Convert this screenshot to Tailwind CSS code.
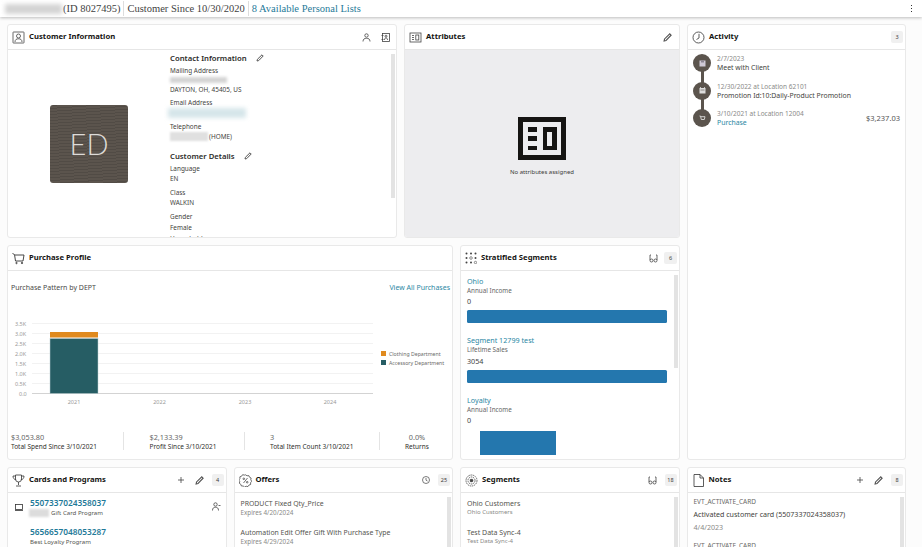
<!DOCTYPE html>
<html lang="en">
<head>
    <meta charset="UTF-8">
    <meta name="viewport" content="width=device-width, initial-scale=1.0">
    <title>Customer 360</title>
    <script src="https://cdn.jsdelivr.net/npm/@tailwindcss/browser@4"></script>
</head>
<body class="h-[547px] overflow-hidden bg-[#fcfcfc] font-['Noto_Sans',sans-serif] text-[#3a3a38]">
    <!-- Top bar -->
    <div class="h-[17px] bg-white shadow-[0_1px_3px_rgba(0,0,0,0.25)] flex items-center font-['Liberation_Serif',serif] text-[10.500px] text-[#3f3f3f] relative">
        <div class="w-[57px] h-[10px] ml-[5px] bg-[#d4d4d4] blur-[2px]"></div>
        <span class="ml-[1px] pr-[3px] border-r border-[#ddd] leading-[15px] oldstyle-nums">(ID 8027495)</span>
        <span class="px-[3px] border-r border-[#ddd] leading-[15px] oldstyle-nums">Customer Since 10/30/2020</span>
        <span class="pl-[3px] text-[#1f7a99] oldstyle-nums">8 Available Personal Lists</span>
        <div class="ml-auto mr-[10px] flex flex-col gap-[1.500px]">
            <span class="w-[1.500px] h-[1.500px] bg-[#333]"></span>
            <span class="w-[1.500px] h-[1.500px] bg-[#333]"></span>
            <span class="w-[1.500px] h-[1.500px] bg-[#333]"></span>
        </div>
    </div>

    <div class="pl-[7px] pt-[7px] w-[906px]">
        <div class="grid grid-cols-[673px_219px] gap-x-[7px]">
            <!-- Left block -->
            <div class="flex flex-col gap-[7px]">
                <div class="flex gap-[7px] h-[214px]">
                    <!-- Customer Information -->
                    <section class="w-[390px] bg-white border border-[#e9e9e9] rounded-[3px] flex flex-col overflow-hidden">
                        <header class="h-[25px] shrink-0 border-b border-[#e6e6e6] flex items-center pl-[4px] pr-[6px]">
                            <svg class="w-[13px] h-[13px]" viewBox="0 0 13 13" fill="none" stroke="#444" stroke-width="0.8"><rect x="1" y="1" width="11" height="11" rx="0.5"/><circle cx="6.5" cy="5" r="2"/><path d="M3 11c0-2.5 1.5-3.2 3.500-3.200S10 8.500 10 11"/></svg>
                            <h2 class="ml-[4px] text-[7.700px] font-bold text-[#161513]">Customer Information</h2>
                            <svg class="ml-auto w-[9px] h-[9px]" viewBox="0 0 9 9" fill="none" stroke="#444" stroke-width="0.8"><circle cx="4.500" cy="2.500" r="1.700"/><path d="M1 8.500c0-2.500 1.500-3.200 3.500-3.200S8 6 8 8.500"/></svg>
                            <svg class="ml-[10px] w-[9px] h-[9px]" viewBox="0 0 9 9" fill="none" stroke="#444" stroke-width="0.8"><rect x="1.500" y="0.500" width="7" height="8"/><circle cx="5" cy="3.200" r="1"/><path d="M3.500 7c0-1.500.6-2 1.500-2s1.500.5 1.500 2M0.500 2.500h2M0.500 6.500h2"/></svg>
                        </header>
                        <div class="flex-1 flex relative overflow-hidden">
                            <div class="w-[162px] shrink-0 flex items-center justify-center">
                                <div class="w-[78px] h-[78px] rounded-[3px] bg-[#5b544d] bg-[repeating-linear-gradient(176deg,#514b45_0,#514b45_1px,transparent_1px,transparent_3px)] flex items-center justify-center font-['Lato',sans-serif] font-light text-[29px] text-[#dddbd8]">ED</div>
                            </div>
                            <div class="text-[6.400px] text-[#3f3f3d] leading-[9px]">
                                <div class="flex items-center mt-[2.500px] h-[11px]">
                                    <h3 class="text-[7.700px] font-semibold text-[#2d2c2a]">Contact Information</h3>
                                    <svg class="ml-[9px] w-[8px] h-[8px]" viewBox="0 0 8 8" fill="none" stroke="#555" stroke-width="1"><path d="M1 7l.4-1.700L6 .8l1.200 1.200-4.500 4.600z"/></svg>
                                </div>
                                <p class="mt-[2px]">Mailing Address</p>
                                <div class="w-[57px] h-[6px] mt-[2px] bg-[#d4d4d4] blur-[1.500px]"></div>
                                <p class="mt-[2px]">DAYTON, OH, 45405, US</p>
                                <p class="mt-[4px]">Email Address</p>
                                <div class="w-[78px] h-[10px] -ml-[2px] mt-[1.500px] bg-[#d6e6ea] blur-[2px]"></div>
                                <p class="mt-[3.500px]">Telephone</p>
                                <div class="flex items-center mt-[1px]">
                                    <div class="w-[38px] h-[9px] bg-[#e0e0e0] blur-[1px]"></div>
                                    <span class="ml-[1px]">(HOME)</span>
                                </div>
                                <div class="flex items-center mt-[10px] h-[11px]">
                                    <h3 class="text-[7.700px] font-semibold text-[#2d2c2a]">Customer Details</h3>
                                    <svg class="ml-[9px] w-[8px] h-[8px]" viewBox="0 0 8 8" fill="none" stroke="#555" stroke-width="1"><path d="M1 7l.4-1.700L6 .8l1.200 1.200-4.500 4.600z"/></svg>
                                </div>
                                <p class="mt-[2px]">Language</p>
                                <p class="mt-[1px]">EN</p>
                                <p class="mt-[5px]">Class</p>
                                <p class="mt-[1px]">WALKIN</p>
                                <p class="mt-[5px]">Gender</p>
                                <p class="mt-[2px]">Female</p>
                                <p class="mt-[2px]">Household</p>
                            </div>
                            <div class="absolute right-[1px] top-[4px] w-[4px] h-[144px] bg-[#e3e3e3]"></div>
                        </div>
                    </section>

                    <!-- Attributes -->
                    <section class="w-[276px] bg-white border border-[#e9e9e9] rounded-[3px] flex flex-col overflow-hidden">
                        <header class="h-[25px] shrink-0 border-b border-[#e6e6e6] flex items-center pl-[4px] pr-[7px]">
                            <svg class="w-[13px] h-[13px]" viewBox="0 0 13 13" fill="none" stroke="#444" stroke-width="0.800"><rect x="1" y="2" width="11" height="9"/><path d="M3 4.500h2M3 6.500h2M3 8.500h2"/><rect x="6.800" y="4" width="3" height="5"/></svg>
                            <h2 class="ml-[4px] text-[7.700px] font-bold text-[#161513]">Attributes</h2>
                            <svg class="ml-auto w-[9px] h-[9px]" viewBox="0 0 8 8" fill="none" stroke="#555" stroke-width="1"><path d="M1 7l.4-1.700L6 .8l1.200 1.200-4.500 4.600z"/></svg>
                        </header>
                        <div class="flex-1 bg-[#ededef] flex flex-col items-center pt-[67px]">
                            <svg class="w-[48px] h-[43px]" viewBox="0 0 48 43" fill="none"><rect x="2.500" y="2.500" width="43" height="38" stroke="#161513" stroke-width="5"/><path d="M10 10h9v5h-9zM10 19h9v5h-9zM10 29h9v4h-9z" fill="#161513"/><path d="M25 10h14v23H25z" fill="#161513"/><path d="M29 15h5v14h-5z" fill="#ededef"/></svg>
                            <p class="mt-[8px] text-[6px] leading-[9px] text-[#3a3a38]">No attributes assigned</p>
                        </div>
                    </section>
                </div>

                <div class="flex gap-[7px] h-[215px]">
                    <!-- Purchase Profile -->
                    <section class="w-[446px] bg-white border border-[#e9e9e9] rounded-[3px] flex flex-col overflow-hidden">
                        <header class="h-[25px] shrink-0 border-b border-[#e6e6e6] flex items-center pl-[4px]">
                            <svg class="w-[13px] h-[13px]" viewBox="0 0 13 13" fill="none" stroke="#333" stroke-width="0.900"><path d="M0.500 1.500l2 1 1 6.500h7.500l1-6H3"/><circle cx="4.500" cy="11" r="0.700"/><circle cx="10" cy="11" r="0.700"/></svg>
                            <h2 class="ml-[4px] text-[7.700px] font-bold text-[#161513]">Purchase Profile</h2>
                        </header>
                        <div class="flex justify-between items-center pl-[3px] pr-[2px] mt-[12px] text-[7px] leading-[10px]">
                            <span class="text-[#4a4a48]">Purchase Pattern by DEPT</span>
                            <span class="text-[#2a87a3]">View All Purchases</span>
                        </div>
                        <!-- Chart -->
                        <svg class="mt-[20.500px] w-[444px] h-[97px]" viewBox="0 0 444 97" font-family="Noto Sans" font-size="5.500" fill="#9a9a98">
                            <g stroke="#ececec" stroke-width="0.700">
                                <path d="M24 9.500h341M24 19.500h341M24 29.500h341M24 39.500h341M24 49.500h341M24 59.500h341M24 69.500h341"/>
                            </g>
                            <path d="M24 79.500h341" stroke="#c8c8c8" stroke-width="0.800"/>
                            <text x="7" y="12">3.5K</text>
                            <text x="7" y="22">3.0K</text>
                            <text x="7" y="32">2.5K</text>
                            <text x="7" y="42">2.0K</text>
                            <text x="7" y="52">1.5K</text>
                            <text x="7" y="62">1.0K</text>
                            <text x="7" y="72">0.5K</text>
                            <text x="11" y="82">0.0</text>
                            <rect x="42" y="18" width="48" height="5.500" fill="#e08a1e"/>
                            <rect x="42" y="24.500" width="48" height="55" fill="#265d64" stroke="#bcd0d2" stroke-width="0.500"/>
                            <text x="66" y="90" text-anchor="middle">2021</text>
                            <text x="151.500" y="90" text-anchor="middle">2022</text>
                            <text x="237" y="90" text-anchor="middle">2023</text>
                            <text x="322" y="90" text-anchor="middle">2024</text>
                            <rect x="373" y="37" width="5" height="5" fill="#e08a1e"/>
                            <rect x="373" y="46" width="5" height="5" fill="#265d64"/>
                            <text x="381" y="42" fill="#6a6a68" font-size="5.200">Clothing Department</text>
                            <text x="381" y="51" fill="#6a6a68" font-size="5.200">Accessory Department</text>
                        </svg>
                        <!-- Totals -->
                        <div class="flex mt-[21px] text-[6.500px] leading-[9px]">
                            <div class="w-[116px] pl-[3px] border-r border-[#e4e4e4] h-[18px]"><p class="text-[#666] text-[7.300px] leading-[10px]">$3,053.80</p><p class="text-[#2f2f2d] whitespace-nowrap">Total Spend Since 3/10/2021</p></div>
                            <div class="w-[121px] pl-[25.500px] border-r border-[#e4e4e4] h-[18px]"><p class="text-[#666] text-[7.300px] leading-[10px]">$2,133.39</p><p class="text-[#2f2f2d] whitespace-nowrap">Profit Since 3/10/2021</p></div>
                            <div class="w-[135px] pl-[25px] border-r border-[#e4e4e4] h-[18px]"><p class="text-[#666] text-[7.300px] leading-[10px]">3</p><p class="text-[#2f2f2d] whitespace-nowrap">Total Item Count 3/10/2021</p></div>
                            <div class="pl-[25px] h-[18px] text-center"><p class="text-[#666] text-[7.300px] leading-[10px]">0.0%</p><p class="text-[#2f2f2d]">Returns</p></div>
                        </div>
                    </section>

                    <!-- Stratified Segments -->
                    <section class="w-[220px] bg-white border border-[#e9e9e9] rounded-[3px] flex flex-col overflow-hidden">
                        <header class="h-[25px] shrink-0 border-b border-[#e6e6e6] flex items-center pl-[4px] pr-[2px]">
                            <svg class="w-[12px] h-[12px]" viewBox="0 0 12 12" fill="#444"><circle cx="1.500" cy="1.500" r="1"/><circle cx="6" cy="1.500" r="1"/><circle cx="10.500" cy="1.500" r="1"/><circle cx="1.500" cy="6" r="1"/><circle cx="6" cy="6" r="1.300" fill="none" stroke="#444" stroke-width="0.600"/><circle cx="10.500" cy="6" r="1"/><circle cx="1.500" cy="10.500" r="1"/><circle cx="6" cy="10.500" r="1"/><circle cx="10.500" cy="10.500" r="1.200" fill="none" stroke="#444" stroke-width="0.600"/></svg>
                            <h2 class="ml-[4px] text-[7.700px] font-bold text-[#161513]">Stratified Segments</h2>
                            <svg class="ml-auto w-[9px] h-[9px]" viewBox="0 0 9 9" fill="none" stroke="#444" stroke-width="0.800"><path d="M1 6V1h1M8 6V1H7M1 6.500a1.500 1.500 0 0 0 3 0 1.500 1.500 0 0 0-3 0M5 6.500a1.500 1.500 0 0 0 3 0 1.500 1.500 0 0 0-3 0"/></svg>
                            <span class="ml-[6.500px] w-[13px] h-[12px] bg-[#f0f0f0] rounded-[2px] flex items-center justify-center text-[5.500px]">6</span>
                        </header>
                        <div class="relative flex-1 pl-[6px] pt-[6px] text-[6.300px] leading-[9px] text-[#666]">
                            <p class="text-[7.200px] text-[#2a87a3]">Ohio</p>
                            <p>Annual Income</p>
                            <p class="mt-[2px] text-[7.200px] text-[#444]">0</p>
                            <div class="mt-[4px] w-[200px] h-[13px] rounded-[1.500px] bg-[#2477ae]"></div>
                            <p class="mt-[13px] text-[7.200px] text-[#2a87a3]">Segment 12799 test</p>
                            <p>Lifetime Sales</p>
                            <p class="mt-[3px] text-[7.200px] text-[#444]">3054</p>
                            <div class="mt-[3.500px] w-[200px] h-[13px] rounded-[1.500px] bg-[#2477ae]"></div>
                            <p class="mt-[13px] text-[7.200px] text-[#2a87a3]">Loyalty</p>
                            <p>Annual Income</p>
                            <p class="mt-[2px] text-[7.200px] text-[#444]">0</p>
                            <div class="mt-[6.500px] ml-[13px] w-[76px] h-[24px] bg-[#2477ae]"></div>
                            <div class="absolute right-[1px] top-[4px] w-[4px] h-[93px] bg-[#e3e3e3]"></div>
                        </div>
                    </section>
                </div>
            </div>

            <!-- Activity -->
            <section class="h-[436px] bg-white border border-[#e9e9e9] rounded-[3px] flex flex-col overflow-hidden">
                <header class="h-[25px] shrink-0 border-b border-[#e6e6e6] flex items-center pl-[4px] pr-[2px]">
                    <svg class="w-[13px] h-[13px]" viewBox="0 0 13 13" fill="none" stroke="#333" stroke-width="0.800"><circle cx="6.500" cy="6.500" r="5.500"/><path d="M7 2.800V7L4.500 8.500"/></svg>
                    <h2 class="ml-[4px] text-[7.700px] font-bold text-[#161513]">Activity</h2>
                    <span class="ml-auto w-[12px] h-[12px] bg-[#f0f0f0] rounded-[2px] flex items-center justify-center text-[5.500px]">3</span>
                </header>
                <div class="relative flex-1 text-[6.900px] leading-[9px]">
                    <div class="absolute left-[12.500px] top-[13px] w-[3px] h-[55px] bg-[#5b544d]"></div>
                    <div class="flex items-center relative h-[18px] mt-[4px] pl-[5px]">
                        <span class="w-[18px] h-[18px] rounded-full bg-[#5b544d] flex items-center justify-center"><svg class="w-[7px] h-[7px]" viewBox="0 0 7 7"><rect x="0.500" y="0.500" width="6" height="6" fill="#cfc9d6"/><rect x="2" y="0.500" width="3" height="2" fill="#8d8794"/></svg></span>
                        <div class="ml-[6px]"><p class="text-[#8a8a88] text-[6.500px]">2/7/2023</p><p class="text-[#3f3f3d]">Meet with Client</p></div>
                    </div>
                    <div class="flex items-center relative h-[18px] mt-[9.500px] pl-[5px]">
                        <span class="w-[18px] h-[18px] rounded-full bg-[#5b544d] flex items-center justify-center"><svg class="w-[7px] h-[7px]" viewBox="0 0 7 7"><rect x="0.500" y="1" width="6" height="5.500" fill="#ddd"/><path d="M1.500 0v2M5.500 0v2" stroke="#ddd" stroke-width="0.800"/><path d="M1.500 3h4" stroke="#5b544d" stroke-width="0.600"/></svg></span>
                        <div class="ml-[6px]"><p class="text-[#8a8a88] text-[6.500px]">12/30/2022 at Location 62101</p><p class="text-[#3f3f3d] whitespace-nowrap">Promotion Id:10:Daily-Product Promotion</p></div>
                    </div>
                    <div class="flex items-center relative h-[18px] mt-[9.500px] pl-[5px]">
                        <span class="w-[18px] h-[18px] rounded-full bg-[#5b544d] flex items-center justify-center"><svg class="w-[7px] h-[7px]" viewBox="0 0 7 7" fill="none" stroke="#eee" stroke-width="0.800"><path d="M0.500 1h1l.8 3.500h3l.7-2.800H2"/></svg></span>
                        <div class="ml-[6px]"><p class="text-[#8a8a88] text-[6.500px]">3/10/2021 at Location 12004</p><p class="text-[#2a87a3]">Purchase</p></div>
                        <span class="ml-auto mr-[5px] text-[7.500px] text-[#555]">$3,237.03</span>
                    </div>
                </div>
            </section>
        </div>

        <!-- Bottom row -->
        <div class="grid grid-cols-4 gap-x-[7px] mt-[7px] w-[899px] h-[90px]">
            <section class="bg-white border border-[#e9e9e9] rounded-[3px] flex flex-col overflow-hidden">
                <header class="h-[25px] shrink-0 border-b border-[#e6e6e6] flex items-center pl-[4px] pr-[2px]">
                    <svg class="w-[13px] h-[13px]" viewBox="0 0 13 13" fill="none" stroke="#333" stroke-width="0.800"><path d="M3.500 1h6v4a3 3 0 0 1-6 0zM3.500 2H1c0 2 1 3.500 3 3.800M9.500 2H12c0 2-1 3.500-3 3.800M6.500 8v3M4 12h5"/></svg>
                    <h2 class="ml-[4px] text-[7.700px] font-bold text-[#161513]">Cards and Programs</h2>
                    <svg class="ml-auto w-[8px] h-[8px]" viewBox="0 0 8 8" stroke="#444" stroke-width="0.800"><path d="M4 1v6M1 4h6"/></svg>
                    <svg class="ml-[10px] w-[9px] h-[9px]" viewBox="0 0 8 8" fill="none" stroke="#555" stroke-width="1"><path d="M1 7l.4-1.700L6 .8l1.200 1.200-4.500 4.600z"/></svg>
                    <span class="ml-[8px] w-[12px] h-[12px] bg-[#f0f0f0] rounded-[2px] flex items-center justify-center text-[5.500px]">4</span>
                </header>
                <div class="relative pl-[22px] pt-[5px] text-[6.100px] leading-[9px] text-[#55554f]">
                    <svg class="absolute left-[7px] top-[11px] w-[8px] h-[7px]" viewBox="0 0 8 7" fill="none" stroke="#333" stroke-width="0.800"><rect x="0.500" y="0.500" width="7" height="5"/><path d="M0 6.500h8"/></svg>
                    <svg class="absolute right-[5px] top-[9px] w-[9px] h-[9px]" viewBox="0 0 9 9" fill="none" stroke="#444" stroke-width="0.800"><circle cx="3.500" cy="2.500" r="1.700"/><path d="M0.500 8.500c0-2.500 1.200-3.200 3-3.200s3 .7 3 3.200M6.500 3.500l2 0"/></svg>
                    <p class="text-[8.300px] leading-[10px] font-semibold text-[#1f7a99]">5507337024358037</p>
                    <div class="flex items-center"><span class="w-[20px] h-[8px] bg-[#dcdcdc] blur-[1px] mr-[2px] -ml-[1px]"></span>Gift Card Program</div>
                    <p class="text-[8.300px] leading-[10px] font-semibold text-[#1f7a99] mt-[10px]">5656657048053287</p>
                    <p>Best Loyalty Program</p>
                </div>
            </section>

            <section class="bg-white border border-[#e9e9e9] rounded-[3px] flex flex-col overflow-hidden">
                <header class="h-[25px] shrink-0 border-b border-[#e6e6e6] flex items-center pl-[4px] pr-[2px]">
                    <svg class="w-[13px] h-[13px]" viewBox="0 0 13 13" fill="none" stroke="#333" stroke-width="0.700"><path d="M6.500 .8l1.500 1 1.800-.2.700 1.600 1.600.8-.3 1.800.9 1.500-1.100 1.400 0 1.800-1.700.6-1 1.500-1.800-.4-1.500.9-1.400-1.100-1.800 0-.6-1.700-1.500-1 .4-1.800-.9-1.500 1.100-1.400 0-1.800 1.700-.6 1-1.500 1.800.4z"/><path d="M4.500 9l4-5"/><circle cx="4.800" cy="4.800" r="0.800"/><circle cx="8.200" cy="8.200" r="0.800"/></svg>
                    <h2 class="ml-[4px] text-[7.700px] font-bold text-[#161513]">Offers</h2>
                    <svg class="ml-auto w-[8px] h-[8px]" viewBox="0 0 8 8" fill="none" stroke="#444" stroke-width="0.700"><circle cx="4" cy="4" r="3.500"/><path d="M4 2v2.200l1.500.8"/></svg>
                    <span class="ml-[8px] w-[12px] h-[12px] bg-[#f0f0f0] rounded-[2px] flex items-center justify-center text-[5.500px]">25</span>
                </header>
                <div class="relative pl-[6px] pt-[5.500px] text-[6.900px] leading-[9px]">
                    <div class="absolute right-[1px] top-[4px] w-[4px] h-[60px] bg-[#e3e3e3]"></div>
                    <p class="text-[#55554f]">PRODUCT Fixed Qty_Price</p>
                    <p class="text-[#8a8a88] text-[6.300px]">Expires 4/20/2024</p>
                    <p class="text-[#55554f] mt-[11px]">Automation Edit Offer Gift With Purchase Type</p>
                    <p class="text-[#8a8a88] text-[6.300px]">Expires 4/29/2024</p>
                </div>
            </section>

            <section class="bg-white border border-[#e9e9e9] rounded-[3px] flex flex-col overflow-hidden">
                <header class="h-[25px] shrink-0 border-b border-[#e6e6e6] flex items-center pl-[4px] pr-[2px]">
                    <svg class="w-[13px] h-[13px]" viewBox="0 0 13 13" fill="none" stroke="#444" stroke-width="0.800" stroke-dasharray="1.500 0.700"><circle cx="6.500" cy="6.500" r="5.500"/><circle cx="6.500" cy="6.500" r="3.500"/><circle cx="6.500" cy="6.500" r="1.500" fill="#444"/></svg>
                    <h2 class="ml-[4px] text-[7.700px] font-bold text-[#161513]">Segments</h2>
                    <svg class="ml-auto w-[9px] h-[9px]" viewBox="0 0 9 9" fill="none" stroke="#444" stroke-width="0.800"><path d="M1 6V1h1M8 6V1H7M1 6.500a1.500 1.500 0 0 0 3 0 1.500 1.500 0 0 0-3 0M5 6.500a1.500 1.500 0 0 0 3 0 1.500 1.500 0 0 0-3 0"/></svg>
                    <span class="ml-[8px] w-[12px] h-[12px] bg-[#f0f0f0] rounded-[2px] flex items-center justify-center text-[5.500px]">18</span>
                </header>
                <div class="relative pl-[6px] pt-[5.500px] text-[7px] leading-[9px]">
                    <div class="absolute right-[1px] top-[4px] w-[4px] h-[60px] bg-[#e3e3e3]"></div>
                    <p class="text-[#55554f]">Ohio Customers</p>
                    <p class="text-[#8a8a88] text-[6px]">Ohio Customers</p>
                    <p class="text-[#55554f] mt-[11px]">Test Data Sync-4</p>
                    <p class="text-[#8a8a88] text-[6px]">Test Data Sync-4</p>
                </div>
            </section>

            <section class="bg-white border border-[#e9e9e9] rounded-[3px] flex flex-col overflow-hidden">
                <header class="h-[25px] shrink-0 border-b border-[#e6e6e6] flex items-center pl-[4px] pr-[2px]">
                    <svg class="w-[13px] h-[13px]" viewBox="0 0 13 13" fill="none" stroke="#333" stroke-width="0.800"><path d="M2 .5h6l3.500 3.500v8.500H2zM8 .5V4h3.500"/></svg>
                    <h2 class="ml-[4px] text-[7.700px] font-bold text-[#161513]">Notes</h2>
                    <svg class="ml-auto w-[8px] h-[8px]" viewBox="0 0 8 8" stroke="#444" stroke-width="0.800"><path d="M4 1v6M1 4h6"/></svg>
                    <svg class="ml-[10px] w-[9px] h-[9px]" viewBox="0 0 8 8" fill="none" stroke="#555" stroke-width="1"><path d="M1 7l.4-1.700L6 .8l1.200 1.200-4.500 4.600z"/></svg>
                    <span class="ml-[8px] w-[12px] h-[12px] bg-[#f0f0f0] rounded-[2px] flex items-center justify-center text-[5.500px]">8</span>
                </header>
                <div class="relative pl-[6px] pt-[4px] text-[7.100px] leading-[9px]">
                    <div class="absolute right-[1px] top-[4px] w-[4px] h-[60px] bg-[#e3e3e3]"></div>
                    <p class="text-[#6a6a68] text-[6.500px]">EVT_ACTIVATE_CARD</p>
                    <p class="text-[#3f3f3d] mt-[4px]">Activated customer card (5507337024358037)</p>
                    <p class="text-[#8a8a88] mt-[4px]">4/4/2023</p>
                    <p class="text-[#6a6a68] text-[6.500px] mt-[9px]">EVT_ACTIVATE_CARD</p>
                </div>
            </section>
        </div>
    </div>
</body>
</html>
